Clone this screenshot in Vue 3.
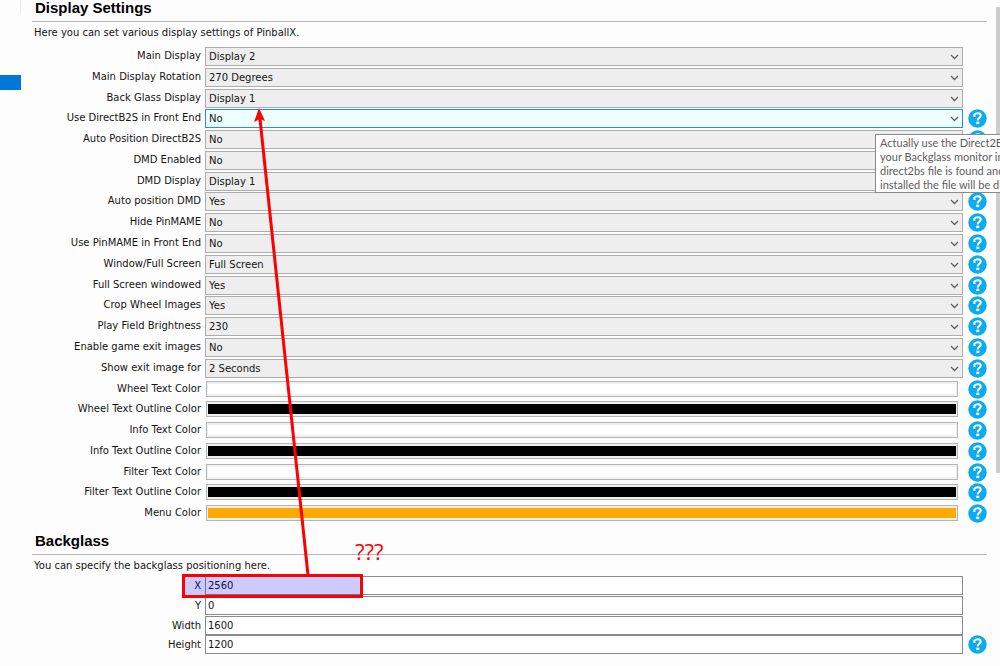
<script setup>
import { reactive } from 'vue'

const displayRows = reactive([
  { label: 'Main Display', value: 'Display 2' },
  { label: 'Main Display Rotation', value: '270 Degrees' },
  { label: 'Back Glass Display', value: 'Display 1' },
  { label: 'Use DirectB2S in Front End', value: 'No', help: true, active: true },
  { label: 'Auto Position DirectB2S', value: 'No', help: true },
  { label: 'DMD Enabled', value: 'No' },
  { label: 'DMD Display', value: 'Display 1' },
  { label: 'Auto position DMD', value: 'Yes', help: true },
  { label: 'Hide PinMAME', value: 'No', help: true },
  { label: 'Use PinMAME in Front End', value: 'No', help: true },
  { label: 'Window/Full Screen', value: 'Full Screen', help: true },
  { label: 'Full Screen windowed', value: 'Yes', help: true },
  { label: 'Crop Wheel Images', value: 'Yes', help: true },
  { label: 'Play Field Brightness', value: '230', help: true },
  { label: 'Enable game exit images', value: 'No', help: true },
  { label: 'Show exit image for', value: '2 Seconds', help: true },
  { label: 'Wheel Text Color', color: '#ffffff', help: true },
  { label: 'Wheel Text Outline Color', color: '#000000', help: true },
  { label: 'Info Text Color', color: '#ffffff', help: true },
  { label: 'Info Text Outline Color', color: '#000000', help: true },
  { label: 'Filter Text Color', color: '#ffffff', help: true },
  { label: 'Filter Text Outline Color', color: '#000000', help: true },
  { label: 'Menu Color', color: '#ffaa00', help: true },
])

const backglassRows = reactive([
  { label: 'X', value: '2560' },
  { label: 'Y', value: '0' },
  { label: 'Width', value: '1600' },
  { label: 'Height', value: '1200', help: true },
])

const tooltipLines = [
  'Actually use the Direct2BS',
  'your Backglass monitor in',
  'direct2bs file is found and',
  'installed the file will be di',
]
</script>

<template>
  <div class="window">
    <aside class="side">
      <div class="side-edge"></div>
      <div class="side-selected"></div>
    </aside>

    <main class="content">
      <section>
        <h2>Display Settings</h2>
        <p>Here you can set various display settings of PinballX.</p>
        <div class="rows display-rows">
          <div v-for="(row, i) in displayRows" :key="row.label" class="row">
            <label :for="'display-' + i">{{ row.label }}</label>
            <input v-if="row.color" :id="'display-' + i" v-model="row.color" class="swatch" type="color" />
            <div v-else class="drop">
              <select :id="'display-' + i" v-model="row.value" :class="{ active: row.active }">
                <option>{{ row.value }}</option>
              </select>
              <svg class="chevron" viewBox="0 0 9 6" aria-hidden="true">
                <path d="M1 1 L4.5 4.5 L8 1" />
              </svg>
            </div>
            <button v-if="row.help" type="button" class="help" aria-label="Help">
              <svg viewBox="0 0 19 19" aria-hidden="true">
                <circle cx="9.5" cy="9.5" r="9.2" />
                <path d="M6.4 8 V5 M6.4 5.6 Q7.6 4.2 9.8 4.2 Q12.7 4.2 12.7 6.6 Q12.7 8.1 11.2 8.9 Q9.7 9.7 9.7 11.4" />
                <rect x="8.3" y="12.7" width="3" height="2.4" />
              </svg>
            </button>
            <div v-if="row.active" class="tooltip" role="tooltip">
              <span v-for="line in tooltipLines" :key="line">{{ line }}</span>
            </div>
          </div>
        </div>
      </section>

      <section class="backglass">
        <h2>Backglass</h2>
        <p>You can specify the backglass positioning here.</p>
        <div class="rows backglass-rows">
          <div v-for="(row, i) in backglassRows" :key="row.label" class="row">
            <label :for="'backglass-' + i">{{ row.label }}</label>
            <input :id="'backglass-' + i" v-model="row.value" class="text" type="text" />
            <button v-if="row.help" type="button" class="help" aria-label="Help">
              <svg viewBox="0 0 19 19" aria-hidden="true">
                <circle cx="9.5" cy="9.5" r="9.2" />
                <path d="M6.4 8 V5 M6.4 5.6 Q7.6 4.2 9.8 4.2 Q12.7 4.2 12.7 6.6 Q12.7 8.1 11.2 8.9 Q9.7 9.7 9.7 11.4" />
                <rect x="8.3" y="12.7" width="3" height="2.4" />
              </svg>
            </button>
          </div>
        </div>
      </section>
    </main>

    <div class="scroll"><div class="thumb"></div></div>

    <svg class="arrow" viewBox="0 0 60 470" aria-hidden="true">
      <path class="shaft" d="M58 468 L10 12" />
      <path class="head" d="M9 1 L15 14 L10 12 L4 15 Z" />
    </svg>
    <div class="mark-box"></div>
    <div class="mark-text">???</div>
  </div>
</template>

<style>
body {
  background: #fdfdfd;
}
</style>

<style scoped>
.window {
  position: relative;
  display: grid;
  grid-template-columns: 21px 1fr 4px;
  min-height: 100vh;
  overflow: hidden;
  box-sizing: border-box;
  color: #141414;
  font: 10px/14px "DejaVu Sans", sans-serif;
}
.side-edge {
  height: 13px;
  border-right: 1px solid #ececec;
}
.side-selected {
  height: 15px;
  margin-top: 62px;
  background: #0078d7;
}
.content {
  padding: 0 9px 0 11px;
}
h2 {
  margin: 0;
  height: 21px;
  padding-left: 3px;
  border-bottom: 1px solid #b8b8b8;
  color: #000;
  font: bold 15px/16px "Liberation Sans", Arial, sans-serif;
}
p {
  margin: 0;
  padding: 4px 0 6px 2px;
}
.rows {
  display: grid;
  grid-auto-rows: 1fr;
}
.display-rows {
  min-height: 478px;
}
.backglass {
  padding-top: 9px;
}
.backglass p {
  padding-bottom: 3px;
}
.backglass-rows {
  min-height: 79px;
}
.row {
  position: relative;
  display: grid;
  grid-template-columns: 169px 1fr 19px;
  column-gap: 4px;
  align-items: start;
}
label {
  padding-top: 3px;
  text-align: right;
}
.drop {
  position: relative;
  display: grid;
  margin: 1px 1px 0 0;
}
select,
.text {
  box-sizing: border-box;
  width: 100%;
  height: 19px;
  margin: 0;
  border: 1px solid #adadad;
  border-radius: 0;
  color: #141414;
  font: inherit;
}
select {
  appearance: none;
  padding: 1px 20px 0 3px;
  background: #eee;
}
select.active {
  border-color: #2a8dde;
  background: #edffff;
}
.chevron {
  position: absolute;
  top: 7px;
  right: 4px;
  width: 9px;
  height: 6px;
  fill: none;
  stroke: #606060;
  stroke-width: 1.3;
  pointer-events: none;
}
.swatch {
  appearance: none;
  box-sizing: border-box;
  width: auto;
  height: 16px;
  margin: 2px 6px 0 1px;
  padding: 2px 1px;
  border: 1px solid #b4b4b4;
  background: #f0f0f0;
}
.swatch::-webkit-color-swatch-wrapper {
  padding: 0;
}
.swatch::-webkit-color-swatch {
  border: 0;
}
.text {
  width: auto;
  margin-right: 1px;
  padding: 0 2px;
  border-color: #8c8c8c;
  background: #fff;
}
.help {
  width: 19px;
  height: 19px;
  margin-top: 1px;
  padding: 0;
  border: 0;
  background: none;
}
.backglass .help {
  margin-top: 0;
}
.help svg {
  display: block;
}
.help circle {
  fill: #0aabf0;
}
.help path {
  fill: none;
  stroke: #fff;
  stroke-width: 2.1;
}
.help rect {
  fill: #fff;
}
.tooltip {
  position: absolute;
  z-index: 1;
  top: 26px;
  right: -42px;
  display: grid;
  grid-auto-rows: 1fr;
  box-sizing: border-box;
  width: 154px;
  height: 59px;
  padding: 1px 4px 2px;
  border: 1px solid #8a8a8a;
  background: #fff;
  color: #5c5c5c;
  font: 11px/14px Lato, "Open Sans", sans-serif;
  white-space: nowrap;
}
.thumb {
  height: 466px;
  margin-top: 7px;
  background: #cdcdcd;
}
.arrow {
  position: absolute;
  z-index: 2;
  top: 107px;
  left: 250px;
  width: 60px;
  height: 470px;
  pointer-events: none;
}
.shaft {
  fill: none;
  stroke: #f00;
  stroke-width: 3;
}
.head {
  fill: #f00;
}
.mark-box {
  position: absolute;
  top: 574px;
  left: 182px;
  box-sizing: border-box;
  width: 181px;
  height: 24px;
  border: 3px solid #f00;
  background: rgba(0, 0, 255, 0.2);
  pointer-events: none;
}
.mark-text {
  position: absolute;
  top: 539px;
  left: 355px;
  color: #f00;
  font: 22px/24px "Open Sans", "Noto Sans", sans-serif;
}
</style>
